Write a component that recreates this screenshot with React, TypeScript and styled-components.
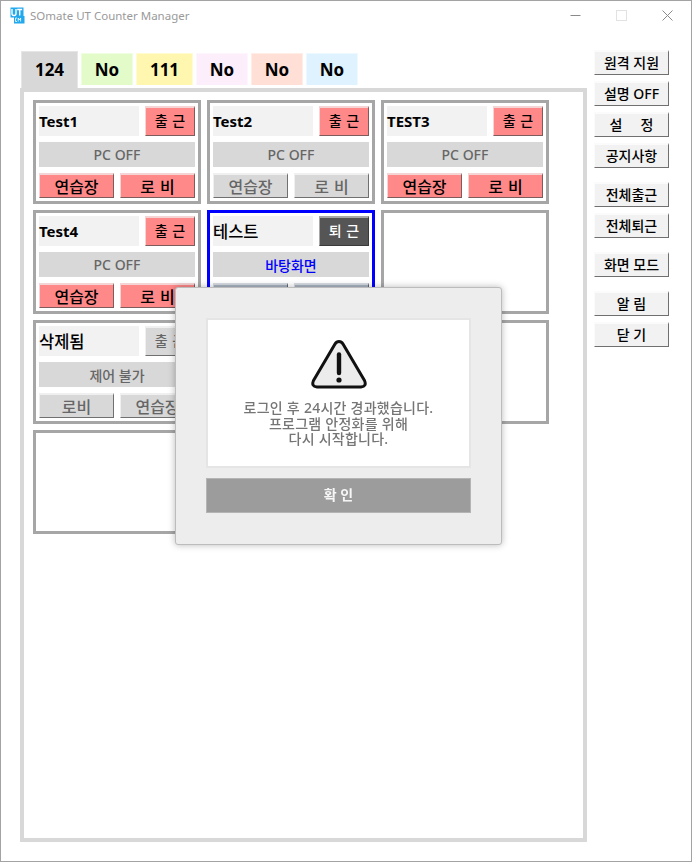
import React from 'react';
import styled, { createGlobalStyle } from 'styled-components';

const KOREAN = `"Noto Sans", "Noto Sans CJK KR", sans-serif`;

const GlobalStyle = createGlobalStyle`
  html, body {
    margin: 0;
    padding: 0;
    background: #fff;
    font-family: ${KOREAN};
  }
  * {
    box-sizing: border-box;
  }
`;

const Window = styled.div`
  position: relative;
  width: 692px;
  height: 862px;
  border: 1px solid #a3a3a3;
  background: #fff;
  display: flex;
  flex-direction: column;
  overflow: hidden;
`;

const TitleBar = styled.div`
  height: 30px;
  display: flex;
  align-items: center;
  padding: 0 0 2px 9px;
  flex-shrink: 0;
`;

const Title = styled.span`
  margin-left: 5px;
  font-size: 11.5px;
  color: #9a9a9a;
  font-family: "Noto Sans", sans-serif;
`;

const WindowControls = styled.div`
  margin-left: auto;
  margin-right: 1px;
  display: flex;
  align-items: center;
`;

const ControlSlot = styled.div`
  width: 46px;
  height: 28px;
  display: flex;
  align-items: center;
  justify-content: center;
`;

const Body = styled.div`
  flex: 1;
  display: flex;
  padding: 20px 0 19px 19px;
  min-height: 0;
`;

const MainColumn = styled.div`
  width: 567px;
  display: flex;
  flex-direction: column;
`;

const TabRow = styled.div`
  display: flex;
  align-items: flex-start;
  gap: 3px;
  height: 37px;
  padding-left: 1px;
  flex-shrink: 0;
`;

const Tab = styled.div<{ $bg: string; $active?: boolean; $w: number }>`
  width: ${(p) => p.$w}px;
  height: ${(p) => (p.$active ? 37 : 32)}px;
  margin-top: ${(p) => (p.$active ? 0 : 2)}px;
  background: ${(p) => p.$bg};
  border: 1px solid ${(p) => (p.$active ? '#e6e6e6' : 'rgba(255,255,255,0.45)')};
  border-bottom: none;
  display: flex;
  align-items: center;
  justify-content: center;
  padding-bottom: ${(p) => (p.$active ? 2 : 0)}px;
  font-size: 17px;
  font-weight: 700;
  color: #000;
`;

const Panel = styled.div`
  flex: 1;
  border: 4px solid #d8d8d8;
  padding: 8px 9px;
  display: grid;
  grid-template-columns: repeat(3, 168px);
  grid-auto-rows: 104px;
  gap: 6px;
  align-content: start;
`;

const Card = styled.div<{ $selected?: boolean }>`
  border: 3px solid ${(p) => (p.$selected ? '#0000ff' : '#a6a6a6')};
  padding: 3px;
  display: flex;
  flex-direction: column;
  gap: 6px;
`;

const TopRow = styled.div`
  display: flex;
  gap: 6px;
  height: 30px;
`;

const NameBox = styled.div<{ $regular?: boolean }>`
  width: 100px;
  background: #f2f2f2;
  display: flex;
  align-items: center;
  font-size: ${(p) => (p.$regular ? 16.5 : 15)}px;
  font-weight: ${(p) => (p.$regular ? 500 : 700)};
  color: #000;
`;

const StatusBar = styled.div<{ $blue?: boolean }>`
  height: 25px;
  background: #d8d8d8;
  display: flex;
  align-items: center;
  justify-content: center;
  font-size: 14px;
  font-weight: 500;
  color: ${(p) => (p.$blue ? '#0000ff' : '#666')};
`;

const BottomRow = styled.div`
  display: flex;
  gap: 6px;
  height: 25px;
`;

type Tone = 'red' | 'gray' | 'dark' | 'slate';

const toneStyles: Record<Tone, { bg: string; fg: string; hi: string; lo: string }> = {
  red: { bg: '#ff8888', fg: '#000', hi: '#f4d4d4', lo: '#7f5c5c' },
  gray: { bg: '#d8d8d8', fg: '#666', hi: '#f0f0f0', lo: '#707070' },
  dark: { bg: '#555555', fg: '#fff', hi: '#a8a8a8', lo: '#3a3a3a' },
  slate: { bg: '#a9b4c3', fg: '#666', hi: '#d6dbe2', lo: '#5e6670' },
};

const BevelButton = styled.div<{ $tone: Tone; $w: number; $size: number; $lift?: number }>`
  width: ${(p) => p.$w}px;
  background: ${(p) => toneStyles[p.$tone].bg};
  color: ${(p) => toneStyles[p.$tone].fg};
  border-top: 2px solid ${(p) => toneStyles[p.$tone].hi};
  border-left: 1px solid ${(p) => toneStyles[p.$tone].hi};
  border-right: 1px solid ${(p) => toneStyles[p.$tone].lo};
  border-bottom: 1px solid ${(p) => toneStyles[p.$tone].lo};
  display: flex;
  align-items: center;
  justify-content: center;
  padding-bottom: ${(p) => p.$lift ?? 0}px;
  font-size: ${(p) => p.$size}px;
  font-weight: 500;
  word-spacing: 1px;
  white-space: pre;
`;

const SideColumn = styled.div`
  width: 75px;
  margin: -1px 0 0 7px;
  display: flex;
  flex-direction: column;
`;

const SideButton = styled.div<{ $gap: number }>`
  width: 75px;
  height: 25px;
  margin-top: ${(p) => p.$gap}px;
  background: #f2f2f2;
  border-top: 2px solid #fbfbfb;
  border-left: 1px solid #fbfbfb;
  border-right: 1px solid #707070;
  border-bottom: 1px solid #707070;
  display: flex;
  align-items: center;
  justify-content: center;
  padding-bottom: 2px;
  font-size: 14px;
  font-weight: 500;
  color: #000;
  white-space: pre;
`;

const Modal = styled.div`
  position: absolute;
  left: 174px;
  top: 286px;
  width: 327px;
  height: 258px;
  background: #ededed;
  border: 1px solid #bcbcbc;
  border-radius: 3px;
  box-shadow: 0 0 7px rgba(0, 0, 0, 0.28);
  padding: 30px 30px 0;
  display: flex;
  flex-direction: column;
  gap: 10px;
`;

const MessageBox = styled.div`
  height: 150px;
  background: #fff;
  border: 2px solid #e5e5e5;
  display: flex;
  flex-direction: column;
  align-items: center;
  padding-top: 19px;
`;

const Message = styled.div`
  margin-top: 9px;
  text-align: center;
  font-size: 14px;
  line-height: 15.5px;
  letter-spacing: 0.25px;
  font-weight: 500;
  color: #757575;
  white-space: nowrap;
  filter: blur(0.3px);
`;

const ConfirmButton = styled.div`
  height: 35px;
  background: #9c9c9c;
  border: 1px solid #b4b4b4;
  display: flex;
  align-items: center;
  justify-content: center;
  padding-bottom: 4px;
  font-size: 14px;
  font-weight: 700;
  color: #f6f6f6;
  white-space: pre;
  filter: blur(0.2px);
`;

const AppIcon = () => (
  <svg width="15" height="17" viewBox="0 0 15 17">
    <rect x="0.5" y="0.5" width="13" height="10" fill="#22a8ec" />
    <rect x="4" y="9" width="10.5" height="7.5" fill="#22a8ec" />
    <path d="M2 2v4.5q0 2 2 2t2-2V2M7.2 2.5h5M9.7 2.5v6" fill="none" stroke="#fff" strokeWidth="1.4" />
    <path d="M7 11h-1.5v3.5H7M8.2 14.5V11l1.2 2 1.2-2v3.5" fill="none" stroke="#fff" strokeWidth="0.8" />
  </svg>
);

const WarningIcon = () => (
  <svg width="58" height="52" viewBox="0 0 58 52" style={{ filter: 'blur(0.3px)' }}>
    <path
      d="M29 2.5 Q31.5 2.5 33 5 L54.5 41.5 Q57 47.5 51 48 L7 48 Q1 47.5 3.5 41.5 L25 5 Q26.5 2.5 29 2.5 Z"
      fill="#ececec"
      stroke="#111"
      strokeWidth="3"
      strokeLinejoin="round"
    />
    <path d="M29 15.5 V34" stroke="#111" strokeWidth="4.4" strokeLinecap="round" />
    <circle cx="29" cy="41" r="2.6" fill="#111" />
  </svg>
);

type Btn = { label: string; tone: Tone };
type CardData = {
  name?: string;
  regular?: boolean;
  punch?: Btn;
  status?: string;
  blue?: boolean;
  left?: Btn;
  right?: Btn;
  selected?: boolean;
};

const CARDS: CardData[] = [
  { name: 'Test1', punch: { label: '출 근', tone: 'red' }, status: 'PC OFF', left: { label: '연습장', tone: 'red' }, right: { label: '로 비', tone: 'red' } },
  { name: 'Test2', punch: { label: '출 근', tone: 'red' }, status: 'PC OFF', left: { label: '연습장', tone: 'gray' }, right: { label: '로 비', tone: 'gray' } },
  { name: 'TEST3', punch: { label: '출 근', tone: 'red' }, status: 'PC OFF', left: { label: '연습장', tone: 'red' }, right: { label: '로 비', tone: 'red' } },
  { name: 'Test4', punch: { label: '출 근', tone: 'red' }, status: 'PC OFF', left: { label: '연습장', tone: 'red' }, right: { label: '로 비', tone: 'red' } },
  { name: '테스트', regular: true, selected: true, punch: { label: '퇴 근', tone: 'dark' }, status: '바탕화면', blue: true, left: { label: '', tone: 'slate' }, right: { label: '', tone: 'slate' } },
  {},
  { name: '삭제됨', regular: true, punch: { label: '출 근', tone: 'gray' }, status: '제어 불가', left: { label: '로비', tone: 'gray' }, right: { label: '연습장', tone: 'gray' } },
  {},
  {},
  {},
];

const TABS = [
  { label: '124', bg: '#d8d8d8', w: 57, active: true },
  { label: 'No', bg: '#e2fbc9', w: 52 },
  { label: '111', bg: '#fff7b0', w: 57 },
  { label: 'No', bg: '#fdeefb', w: 52 },
  { label: 'No', bg: '#ffdfd6', w: 52 },
  { label: 'No', bg: '#dff2ff', w: 52 },
];

const SIDE_BUTTONS = [
  { label: '원격 지원', gap: 0 },
  { label: '설명 OFF', gap: 6 },
  { label: '설     정', gap: 6 },
  { label: '공지사항', gap: 6 },
  { label: '전체출근', gap: 14 },
  { label: '전체퇴근', gap: 6 },
  { label: '화면 모드', gap: 14 },
  { label: '알 림', gap: 14 },
  { label: '닫 기', gap: 6 },
];

const App = () => {
  return (
    <>
      <GlobalStyle />
      <Window>
        <TitleBar>
          <AppIcon />
          <Title>SOmate UT Counter Manager</Title>
          <WindowControls>
            <ControlSlot>
              <svg width="11" height="11" viewBox="0 0 11 11">
                <path d="M0.5 5.5h10" stroke="#8a8a8a" strokeWidth="1" />
              </svg>
            </ControlSlot>
            <ControlSlot>
              <svg width="11" height="11" viewBox="0 0 11 11">
                <rect x="0.5" y="0.5" width="10" height="10" fill="none" stroke="#e2e2e2" />
              </svg>
            </ControlSlot>
            <ControlSlot>
              <svg width="11" height="11" viewBox="0 0 11 11">
                <path d="M0.5 0.5l10 10M10.5 0.5l-10 10" stroke="#8a8a8a" strokeWidth="1" />
              </svg>
            </ControlSlot>
          </WindowControls>
        </TitleBar>
        <Body>
          <MainColumn>
            <TabRow>
              {TABS.map((tab, i) => (
                <Tab key={i} $bg={tab.bg} $w={tab.w} $active={tab.active}>
                  {tab.label}
                </Tab>
              ))}
            </TabRow>
            <Panel>
              {CARDS.map((card, i) => (
                <Card key={i} $selected={card.selected}>
                  {card.name && (
                    <>
                      <TopRow>
                        <NameBox $regular={card.regular}>{card.name}</NameBox>
                        <BevelButton $tone={card.punch!.tone} $w={50} $size={14} $lift={3}>
                          {card.punch!.label}
                        </BevelButton>
                      </TopRow>
                      <StatusBar $blue={card.blue}>{card.status}</StatusBar>
                      <BottomRow>
                        <BevelButton $tone={card.left!.tone} $w={75} $size={16}>
                          {card.left!.label}
                        </BevelButton>
                        <BevelButton $tone={card.right!.tone} $w={75} $size={16}>
                          {card.right!.label}
                        </BevelButton>
                      </BottomRow>
                    </>
                  )}
                </Card>
              ))}
            </Panel>
          </MainColumn>
          <SideColumn>
            {SIDE_BUTTONS.map((b) => (
              <SideButton key={b.label} $gap={b.gap}>
                {b.label}
              </SideButton>
            ))}
          </SideColumn>
        </Body>
        <Modal>
          <MessageBox>
            <WarningIcon />
            <Message>
              로그인 후 24시간 경과했습니다.
              <br />
              프로그램 안정화를 위해
              <br />
              다시 시작합니다.
            </Message>
          </MessageBox>
          <ConfirmButton>확 인</ConfirmButton>
        </Modal>
      </Window>
    </>
  );
};

export default App;
